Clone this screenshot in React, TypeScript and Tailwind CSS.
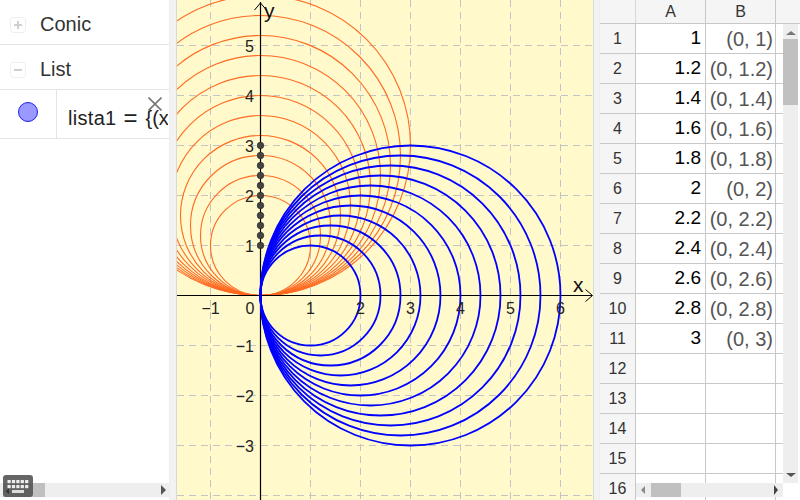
import React from 'react';

const radii = [1, 1.2, 1.4, 1.6, 1.8, 2, 2.2, 2.4, 2.6, 2.8, 3];
const OX = 83.5; // origin inside the graphics pane
const OY = 295.5;
const U = 50;

const rows = [
  ['1', '(0, 1)'],
  ['1.2', '(0, 1.2)'],
  ['1.4', '(0, 1.4)'],
  ['1.6', '(0, 1.6)'],
  ['1.8', '(0, 1.8)'],
  ['2', '(0, 2)'],
  ['2.2', '(0, 2.2)'],
  ['2.4', '(0, 2.4)'],
  ['2.6', '(0, 2.6)'],
  ['2.8', '(0, 2.8)'],
  ['3', '(0, 3)'],
  ['', ''],
  ['', ''],
  ['', ''],
  ['', ''],
  ['', ''],
];

const font = { fontFamily: '"Liberation Sans", Arial, sans-serif' };

function Graphics() {
  const xTicks = [-1, 1, 2, 3, 4, 5, 6];
  const yTicks = [5, 4, 3, 2, 1, -1, -2, -3];
  return (
    <svg width="416" height="500" viewBox="0 0 416 500" className="block" style={font}>
      <rect width="416" height="500" fill="#fff9cc" />
      {/* grid */}
      {[-1, 1, 2, 3, 4, 5, 6].map((i) => (
        <line key={i} x1={OX + i * U} x2={OX + i * U} y1="0" y2="500" stroke="#c4c4c4" strokeDasharray="7 5" />
      ))}
      {[5, 4, 3, 2, 1, -1, -2, -3, -4].map((i) => (
        <line key={i} x1="0" x2="416" y1={OY - i * U} y2={OY - i * U} stroke="#c4c4c4" strokeDasharray="7 5" />
      ))}
      {/* orange circles */}
      {radii.map((r) => (
        <circle key={r} cx={OX} cy={OY - r * U} r={r * U} fill="none" stroke="#ff6a20" strokeWidth="1.1" />
      ))}
      {/* axes */}
      <line x1="0" x2="415" y1={OY} y2={OY} stroke="#000" strokeWidth="1.2" />
      <line x1={OX} x2={OX} y1="2" y2="500" stroke="#000" strokeWidth="1.2" />
      <path d={`M${OX - 6} 10 L${OX} 3 L${OX + 6} 10`} fill="none" stroke="#000" />
      <path d={`M408.5 ${OY - 6} L415.5 ${OY} L408.5 ${OY + 6}`} fill="none" stroke="#000" />
      {/* blue circles */}
      {radii.map((r) => (
        <circle key={r} cx={OX + r * U} cy={OY} r={r * U} fill="none" stroke="#0000ff" strokeWidth="1.8" />
      ))}
      {/* points */}
      {radii.map((r) => (
        <circle key={r} cx={OX} cy={OY - r * U} r="3.3" fill="#444" stroke="#222" strokeWidth="0.6" />
      ))}
      {/* labels */}
      {xTicks.map((i) => (
        <text key={i} x={OX + i * U} y="314" fontSize="16" fill="#222" textAnchor="middle">
          {i < 0 ? `\u2212${-i}` : i}
        </text>
      ))}
      <text x="73" y="314" fontSize="16" fill="#222" textAnchor="middle">0</text>
      {yTicks.map((i) => (
        <text key={i} x="77" y={OY - i * U + 6} fontSize="16" fill="#222" textAnchor="end">
          {i < 0 ? `\u2212${-i}` : i}
        </text>
      ))}
      <text x="87" y="18" fontSize="21" fill="#111">y</text>
      <text x="396" y="292" fontSize="21" fill="#111">x</text>
    </svg>
  );
}

function Keyboard() {
  return (
    <div className="absolute left-[3px] top-[475px] h-[22px] w-[30px] rounded-[3px] bg-[#555]/90">
      <svg width="30" height="22" viewBox="0 0 30 22" className="block">
        {[0, 1, 2, 3, 4].map((i) => (
          <g key={i} fill="#eee">
            <rect x={4.5 + i * 4.4} y="5" width="3.2" height="3.2" />
            <rect x={4.5 + i * 4.4} y="10" width="3.2" height="3.2" />
          </g>
        ))}
        <rect x="9" y="15" width="12" height="3" fill="#ddd" />
        <path d="M6 13.5V19L2.5 16.2Z" fill="#333" />
      </svg>
    </div>
  );
}

function BoxIcon({ open }: { open?: boolean }) {
  return (
    <svg width="16" height="16" viewBox="0 0 16 16" className="mt-[2px] block shrink-0">
      <rect x="0.5" y="0.5" width="15" height="15" rx="3" fill="#fff" stroke="#eeeeee" />
      <path d={open ? 'M4 8H12' : 'M4 8H12M8 4V12'} stroke="#cfcfcf" strokeWidth="2" />
    </svg>
  );
}

function LeftPanel() {
  return (
    <div className="relative flex h-[500px] w-[169px] shrink-0 flex-col bg-white text-[#333]">
      <div className="flex h-[45px] items-center border-b border-[#e4e4e4] pl-[10px] pt-[3px]">
        <BoxIcon />
        <span className="ml-[14px] text-[20px]">Conic</span>
      </div>
      <div className="flex h-[45px] items-center border-b border-[#e4e4e4] pl-[10px] pt-[3px]">
        <BoxIcon open />
        <span className="ml-[14px] text-[20px]">List</span>
      </div>
      <div className="flex h-[49px] border-b border-[#e4e4e4]">
        <div className="flex w-[57px] shrink-0 items-center justify-center border-r border-[#e4e4e4] pb-[4px]">
          <span className="h-[20px] w-[20px] rounded-full border border-[#2020ee] bg-[#9999ff]" />
        </div>
        <div className="flex w-[111px] items-center overflow-hidden whitespace-nowrap pl-[11px] pt-[7px] text-[20px] text-[#222]">
          <span className="tracking-[0.3px]">lista1</span>
          <span className="ml-[7px] text-[24px] leading-none">=</span>
          <span className="ml-[8px]">{'{(x'}</span>
        </div>
      </div>
      <svg width="14" height="14" viewBox="0 0 14 14" className="absolute left-[148px] top-[97px]">
        <path d="M0.5 0.5L13.5 13.5M13.5 0.5L0.5 13.5" stroke="#777" strokeWidth="1.6" />
      </svg>
      <div className="mt-auto mb-[3px] flex h-[14px] items-center justify-between bg-[#eee]">
        <div className="ml-[3px] h-full w-[42px] bg-[#c0c0c0]" />
        <span className="mr-[3px] h-0 w-0 border-y-[5px] border-l-[5px] border-y-transparent border-l-[#555]" />
      </div>
      <Keyboard />
    </div>
  );
}

function Spreadsheet() {
  return (
    <div className="relative h-[500px] w-[200px] shrink-0 overflow-hidden bg-white">
      <div className="flex h-[24px] border-b border-[#c8c8c8] bg-[#f5f5f5] pr-[2px] text-[16px] text-[#333]">
        <div className="w-[36px] border-r border-[#d8d8d8]" />
        <div className="flex w-[70px] items-center justify-center border-r border-[#c8c8c8]">A</div>
        <div className="flex w-[70px] items-center justify-center border-r border-[#c8c8c8]">B</div>
      </div>
      {rows.map(([a, b], i) => (
        <div key={i} className="flex h-[30px] w-[183px] border-b border-[#c8c8c8]">
          <div className="flex w-[36px] items-center justify-center border-r border-[#c8c8c8] bg-[#f5f5f5] text-[16px] text-[#333]">
            {i + 1}
          </div>
          <div className="flex w-[70px] items-center justify-end border-r border-[#c8c8c8] pr-[4px] text-[19px] text-black">
            {a}
          </div>
          <div className="flex w-[70px] items-center justify-end whitespace-nowrap border-r border-[#c8c8c8] pr-[2px] text-[20px] text-[#555]">
            {b}
          </div>
        </div>
      ))}
      {/* vertical scrollbar */}
      <div className="absolute left-[183px] top-[24px] flex h-[459px] w-[15px] flex-col items-center bg-[#eee]">
        <span className="mt-[7px] h-0 w-0 border-x-[5px] border-b-[4px] border-x-transparent border-b-[#777]" />
        <div className="mt-[4px] h-[66px] w-full bg-[#c0c0c0]" />
        <span className="mt-auto mb-[6px] h-0 w-0 border-x-[5px] border-t-[4px] border-x-transparent border-t-[#555]" />
      </div>
      {/* horizontal scrollbar */}
      <div className="absolute left-[36px] top-[483px] flex h-[14px] w-[147px] items-center bg-[#eee]">
        <span className="ml-[5px] h-0 w-0 border-y-[4px] border-r-[4px] border-y-transparent border-r-[#888]" />
        <div className="ml-[6px] h-full w-[30px] bg-[#c0c0c0]" />
        <span className="ml-auto mr-[5px] h-0 w-0 border-y-[5px] border-l-[4px] border-y-transparent border-l-[#444]" />
      </div>
    </div>
  );
}

export default function App() {
  return (
    <div className="flex h-[500px] w-[800px] overflow-hidden bg-white" style={font}>
      <LeftPanel />
      <div className="w-[8px] shrink-0 border-x border-l-[#eee] border-r-[#d8d8d8] bg-[#f2f2f2]" />
      <Graphics />
      <div className="w-[7px] shrink-0 border-x border-l-[#d8d8d8] border-r-[#eee] bg-[#f2f2f2]" />
      <Spreadsheet />
    </div>
  );
}
